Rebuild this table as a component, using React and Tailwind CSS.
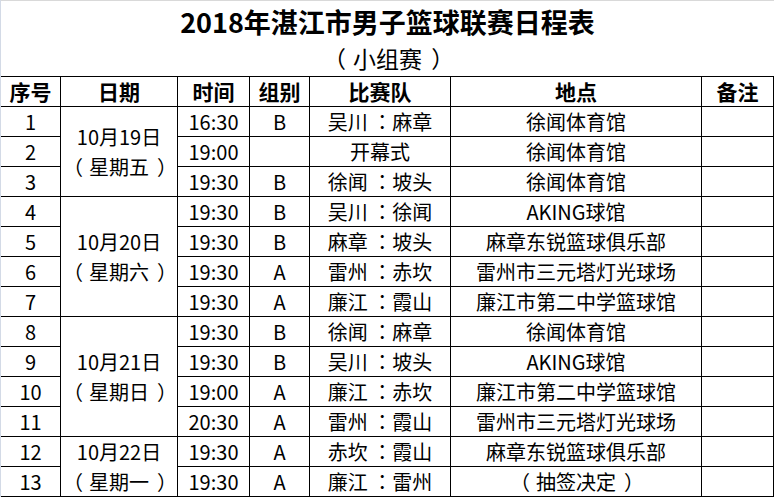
const rows = [
  ['1', '16:30', 'B', '吴川 ：麻章', '徐闻体育馆'],
  ['2', '19:00', '', '开幕式', '徐闻体育馆'],
  ['3', '19:30', 'B', '徐闻 ：坡头', '徐闻体育馆'],
  ['4', '19:30', 'B', '吴川 ：徐闻', 'AKING球馆'],
  ['5', '19:30', 'B', '麻章 ：坡头', '麻章东锐篮球俱乐部'],
  ['6', '19:30', 'A', '雷州 ：赤坎', '雷州市三元塔灯光球场'],
  ['7', '19:30', 'A', '廉江 ：霞山', '廉江市第二中学篮球馆'],
  ['8', '19:30', 'B', '徐闻 ：麻章', '徐闻体育馆'],
  ['9', '19:30', 'B', '吴川 ：坡头', 'AKING球馆'],
  ['10', '19:00', 'A', '廉江 ：赤坎', '廉江市第二中学篮球馆'],
  ['11', '20:30', 'A', '雷州 ：霞山', '雷州市三元塔灯光球场'],
  ['12', '19:30', 'A', '赤坎 ：霞山', '麻章东锐篮球俱乐部'],
  ['13', '19:30', 'A', '廉江 ：雷州', '（抽签决定）'],
]

// date groups keyed by first row index
const dates = {
  0: { day: '10月19日', week: '（星期五）', span: 'row-span-3' },
  3: { day: '10月20日', week: '（星期六）', span: 'row-span-4' },
  7: { day: '10月21日', week: '（星期日）', span: 'row-span-4' },
  11: { day: '10月22日', week: '（星期一）', span: 'row-span-2' },
}

const headers = ['序号', '日期', '时间', '组别', '比赛队', '地点', '备注']

function Cell({ children, className = '' }) {
  return (
    <div className={`flex items-center justify-center border-r border-b border-black whitespace-pre ${className}`}>
      {children}
    </div>
  )
}

// keeps fullwidth brackets a full em wide, ink nearer the middle of the box
function Wide({ text }) {
  if (!text.startsWith('（')) return text
  return (
    <span>
      <span className="inline-block w-[1em]"><span className="ml-[-0.3em]">（</span></span>
      {text.slice(1, -1)}
      <span className="inline-block w-[1em] pl-[0.4em]">）</span>
    </span>
  )
}

function Teams({ text }) {
  const [a, b] = text.split(' ：')
  if (b === undefined) return text
  // centred fullwidth colon, like the original sheet font
  return (
    <>
      {a}{' '}
      <span className="font-['Noto_Sans_CJK_TC',sans-serif]">：</span>
      {b}
    </>
  )
}

export default function App() {
  return (
    <div className="w-[774px] h-[497px] bg-white text-black border-l border-[#d3dae6] font-['Noto_Sans_CJK_SC',sans-serif] overflow-hidden">
      {/* Title */}
      <div className="h-[76px] border-t border-[#d9d9d9] flex flex-col">
        <div className="h-[40px] flex items-center justify-center text-[27px] font-bold leading-none">
          2018年湛江市男子篮球联赛日程表
        </div>
        <div className="h-[34px] flex items-center justify-center text-[23px] leading-none">
          <Wide text="（小组赛）" />
        </div>
      </div>

      {/* Schedule grid */}
      <div className="grid grid-cols-[60px_117px_72px_60px_141px_251px_72px] auto-rows-[30px] border-t border-black text-[20px] leading-none">
        {headers.map((h) => (
          <Cell key={h} className="font-bold text-[21px]">{h}</Cell>
        ))}
        {rows.map((r, i) => (
          <RowCells key={r[0]} r={r} date={dates[i]} />
        ))}
      </div>
    </div>
  )
}

function RowCells({ r, date }) {
  return (
    <>
      <Cell>{r[0]}</Cell>
      {date && (
        <Cell className={`${date.span} flex-col leading-[30px]`}>
          <span>{date.day}</span>
          <Wide text={date.week} />
        </Cell>
      )}
      <Cell>{r[1]}</Cell>
      <Cell>{r[2]}</Cell>
      <Cell><Teams text={r[3]} /></Cell>
      <Cell><Wide text={r[4]} /></Cell>
      <Cell />
    </>
  )
}
